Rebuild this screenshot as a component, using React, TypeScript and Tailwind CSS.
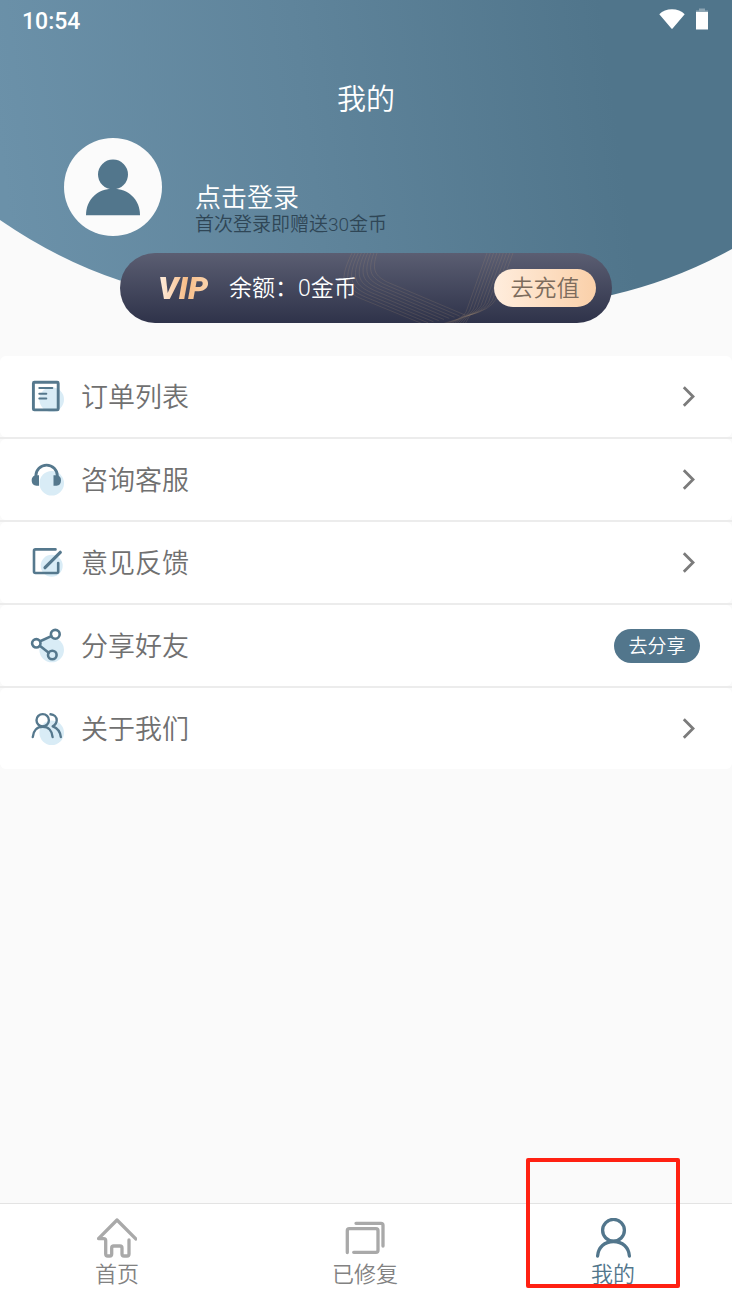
import type { ReactNode } from "react";

const BLUE = "#55788d";
const PALE = "#d9ecf6";

function HeaderBackdrop() {
  return (
    <svg
      className="absolute inset-x-0 top-0 h-[300px] w-full"
      viewBox="0 0 732 300"
      preserveAspectRatio="none"
      aria-hidden="true"
    >
      <defs>
        <linearGradient id="header-fill" gradientUnits="userSpaceOnUse" x1="0" y1="150" x2="610" y2="70">
          <stop offset="0" stopColor="#6b91a9" />
          <stop offset="0.500" stopColor="#5f849b" />
          <stop offset="1" stopColor="#50758b" />
        </linearGradient>
      </defs>
      <path d="M0 0H732V249Q676 280 612 295Q366 310 120 280.500Q58 260 0 220Z" fill="url(#header-fill)" />
    </svg>
  );
}

function WifiIcon() {
  return (
    <svg className="h-5 w-[26px]" viewBox="0 0 26 20" fill="#fff" aria-hidden="true">
      <path d="M0.300 5.200C3.500 1.800 8 0.200 13 0.200S22.500 1.800 25.700 5.200L13.800 19.300Q13 20.300 12.200 19.300Z" />
    </svg>
  );
}

function BatteryIcon() {
  return (
    <svg className="h-[22px] w-3" viewBox="0 0 12 22" aria-hidden="true">
      <path d="M3 0.500H9V2.500H12V4.500H0V2.500H3Z" fill="#fff" fillOpacity="0.350" />
      <path d="M0 4H12V21.500H0Z" fill="#fff" />
    </svg>
  );
}

function Avatar() {
  return (
    <svg className="size-[98px] shrink-0" viewBox="0 0 98 98" aria-hidden="true">
      <circle cx="49" cy="49" r="49" fill="#fbfbfb" />
      <circle cx="49" cy="36.500" r="15" fill="#52768c" />
      <path d="M22 77.300C22 61 34 50.800 49 50.800S76 61 76 77.300Z" fill="#52768c" />
    </svg>
  );
}

function BarPattern() {
  const steps = Array.from({ length: 9 }, (_, i) => i / 8);
  const mix = (a: number, b: number, t: number) => (a + (b - a) * t).toFixed(2);
  return (
    <svg
      className="absolute top-0 left-[220px] h-[70px] w-[180px]"
      viewBox="220 0 180 70"
      fill="none"
      stroke="#b49a78"
      strokeOpacity="0.200"
      strokeWidth="0.900"
      aria-hidden="true"
    >
      {steps.map((t) => (
        <path
          key={`a${t}`}
          d={`M${mix(232, 257, t)} 0C${mix(216, 251, t)} ${mix(32, 18, t)} ${mix(226, 256, t)} ${mix(39, 23, t)} ${mix(242, 267, t)} ${mix(46, 29, t)}L${mix(303, 345, t)} ${mix(71, 62, t)}`}
        />
      ))}
      {steps.map((t) => (
        <path
          key={`b${t}`}
          d={`M${mix(367, 393, t)} 0L${mix(346, 376, t)} ${mix(59, 46, t)}Q${mix(345, 370, t)} ${mix(62, 57, t)} ${mix(338, 350, t)} ${mix(66, 62, t)}L${mix(322, 345, t)} 71`}
        />
      ))}
    </svg>
  );
}

function RowIcon({ cy, r = 12.3, children }: { cy: number; r?: number; children: ReactNode }) {
  return (
    <svg
      className="size-9 shrink-0"
      viewBox="0 0.500 36 36"
      fill="none"
      stroke={BLUE}
      strokeWidth="2.600"
      strokeLinecap="round"
      strokeLinejoin="round"
      aria-hidden="true"
    >
      <circle cx="21.700" cy={cy} r={r} fill={PALE} stroke="none" />
      {children}
    </svg>
  );
}

const icons = {
  orders: (
    <RowIcon cy={21}>
      <rect x="3.400" y="3.800" width="24.800" height="27.600" rx="1" strokeWidth="2.900" />
      <path d="M9.300 9.500H22.300M9.300 15.200H16.300M9.300 20H16.300" strokeWidth="2" />
    </RowIcon>
  ),
  support: (
    <RowIcon cy={21.8}>
      <path d="M5.800 17V14.400a10.800 10.800 0 0 1 21.600 0V17" strokeWidth="2.800" />
      <path
        d="M9 13.800V24.200H6.500C3.500 24.200 1.700 22 1.700 19S3.500 13.800 6.500 13.800ZM23.500 13.800V24.200H26.500C29.500 24.200 31 22 31 19S29.500 13.800 26.500 13.800Z"
        fill={BLUE}
        stroke="none"
      />
    </RowIcon>
  ),
  feedback: (
    <RowIcon cy={21.2} r={11}>
      <path d="M25.500 4.900H5.500Q4 4.900 4 6.400V27Q4 28.500 5.500 28.500H26.700Q28.200 28.500 28.200 27V18.500" />
      <path d="M15 23.200L30.300 7.800" strokeWidth="3.200" />
    </RowIcon>
  ),
  share: (
    <RowIcon cy={22.5}>
      <path d="M10.200 13.800L21.300 8.600M9.800 18.300L18.700 25.200" />
      <circle cx="6.300" cy="15.800" r="4.200" />
      <circle cx="25.300" cy="6.800" r="4.400" />
      <circle cx="22.300" cy="27.500" r="4.300" />
    </RowIcon>
  ),
  about: (
    <RowIcon cy={22.2}>
      <circle cx="12.700" cy="9.800" r="6.200" strokeWidth="2.400" />
      <path
        d="M2.800 26.500C3.300 20.500 7 16.300 12.700 16.300S22.100 20.500 22.600 26.500M20.500 3.800C24 4 26.700 6.500 26.700 9.800C26.700 12.500 25 14.500 22.700 15.800C27.500 17.500 30.300 21.500 30.800 26.500"
        strokeWidth="2.400"
      />
    </RowIcon>
  ),
};

function Chevron() {
  return (
    <svg
      className="mr-1 h-[22px] w-[14px]"
      viewBox="0 0.500 14 22"
      fill="none"
      stroke="#7b7b7b"
      strokeWidth="2.800"
      aria-hidden="true"
    >
      <path d="M1.800 1.800L11 11L1.800 20.200" />
    </svg>
  );
}

const rows = [
  { key: "orders", label: "订单列表", icon: icons.orders },
  { key: "support", label: "咨询客服", icon: icons.support },
  { key: "feedback", label: "意见反馈", icon: icons.feedback },
  { key: "share", label: "分享好友", icon: icons.share, action: "去分享" },
  { key: "about", label: "关于我们", icon: icons.about },
];

const tabs = [
  {
    label: "首页",
    active: false,
    icon: (
      <path d="M20 2L39 21M20 2L1.500 20.600H6.700Q8.700 20.600 8.700 22.600V36Q8.700 38 10.700 38H12.700Q14.700 38 14.700 36V30Q14.700 28 16.700 28H23Q25 28 25 30V36Q25 38 27 38H30Q32 38 32 36V22" />
    ),
  },
  {
    label: "已修复",
    active: false,
    icon: (
      <path d="M2.300 34.500V12.700Q2.300 10.700 4.300 10.700H31Q33 10.700 33 12.700V32.300Q33 34.300 31 34.300H8.700M11 5.300H36Q38 5.300 38 7.300V28" />
    ),
  },
  {
    label: "我的",
    active: true,
    icon: (
      <>
        <circle cx="20.500" cy="12.300" r="10.900" />
        <path d="M4.600 38C5.200 29.500 11.500 23.500 20.500 23.500S35.800 29.500 36.400 38" />
      </>
    ),
  },
];

export default function App() {
  return (
    <div className="relative flex min-h-screen flex-col bg-[#fafafa] font-[Roboto,'Noto_Sans_CJK_SC',sans-serif] font-[350]">
      <header className="relative text-white">
        <HeaderBackdrop />
        <div className="relative flex h-[42px] items-center justify-between pr-6 pl-[22px]">
          <span className="pt-0.5 text-[23px] leading-7 font-medium">10:54</span>
          <div className="flex items-center gap-[11px] pb-1">
            <WifiIcon />
            <BatteryIcon />
          </div>
        </div>
        <h1 className="relative pt-9 text-center text-[29px] leading-[44px]">我的</h1>
        <div className="relative mt-4 flex items-end gap-[33px] pl-16">
          <Avatar />
          <div>
            <button type="button" className="block text-[26px] leading-8">
              点击登录
            </button>
            <p className="text-[19px] leading-[22px] text-[#2f4656]">首次登录即赠送30金币</p>
          </div>
        </div>
        <section className="relative mx-[120px] mt-[17px] flex h-[70px] items-center overflow-hidden rounded-full bg-linear-to-b from-[#5b5e72] to-[#2f334a] pr-4 pl-[38px] text-[23px] leading-8">
          <BarPattern />
          <span className="relative w-[71px] bg-linear-to-r from-[#fff0e2] via-[#f7bd88] via-40% to-[#fbd3ac] to-70% bg-clip-text text-[32px] leading-10 font-black text-transparent italic">
            VIP
          </span>
          <span className="relative pt-0.5">余额：0金币</span>
          <button
            type="button"
            className="relative ml-auto h-[38px] w-[102px] rounded-full bg-linear-to-r from-[#ffeddd] to-[#fad0a9] pt-0.5 text-[#7d6c5d]"
          >
            去充值
          </button>
        </section>
      </header>

      <main className="mt-[33px] grow pb-8">
        <ul className="flex flex-col">
          {rows.map((row, i) => (
            <li key={row.key}>
              {i > 0 && <div className="h-0.5 bg-[#ececec]" />}
              <div className="flex h-[81px] items-center rounded-md bg-white pr-8 pl-[30px]">
                {row.icon}
                <a href={`#${row.key}`} className="ml-[15px] grow pt-0.5 text-[27px] leading-10 text-[#707070]">
                  {row.label}
                </a>
                {row.action ? (
                  <button
                    type="button"
                    className="h-[34px] w-[86px] rounded-full bg-[#52768c] pt-0.5 text-[19px] leading-6 text-white"
                  >
                    {row.action}
                  </button>
                ) : (
                  <Chevron />
                )}
              </div>
            </li>
          ))}
        </ul>
      </main>

      <nav className="relative flex justify-between border-t border-[#e3e3e3] bg-white pt-[14px] pr-[86px] pb-3 pl-[84px]">
        {tabs.map((tab) => (
          <a
            key={tab.label}
            href={`#${tab.label}`}
            className={
              tab.active
                ? "flex w-[66px] flex-col items-center text-[#52768c]"
                : "flex w-[66px] flex-col items-center text-[#a9a9a9]"
            }
          >
            <svg
              className="size-10"
              viewBox="0 0 40 40"
              fill="none"
              stroke="currentColor"
              strokeWidth="3.300"
              strokeLinecap="round"
              strokeLinejoin="round"
              aria-hidden="true"
            >
              {tab.icon}
            </svg>
            <span className={tab.active ? "text-[22px] leading-[34px]" : "text-[22px] leading-[34px] text-[#828282]"}>
              {tab.label}
            </span>
          </a>
        ))}
        <div className="pointer-events-none absolute right-[52px] bottom-4 h-[130px] w-[154px] rounded-xs border-4 border-[#ff2112]" />
      </nav>
    </div>
  );
}
